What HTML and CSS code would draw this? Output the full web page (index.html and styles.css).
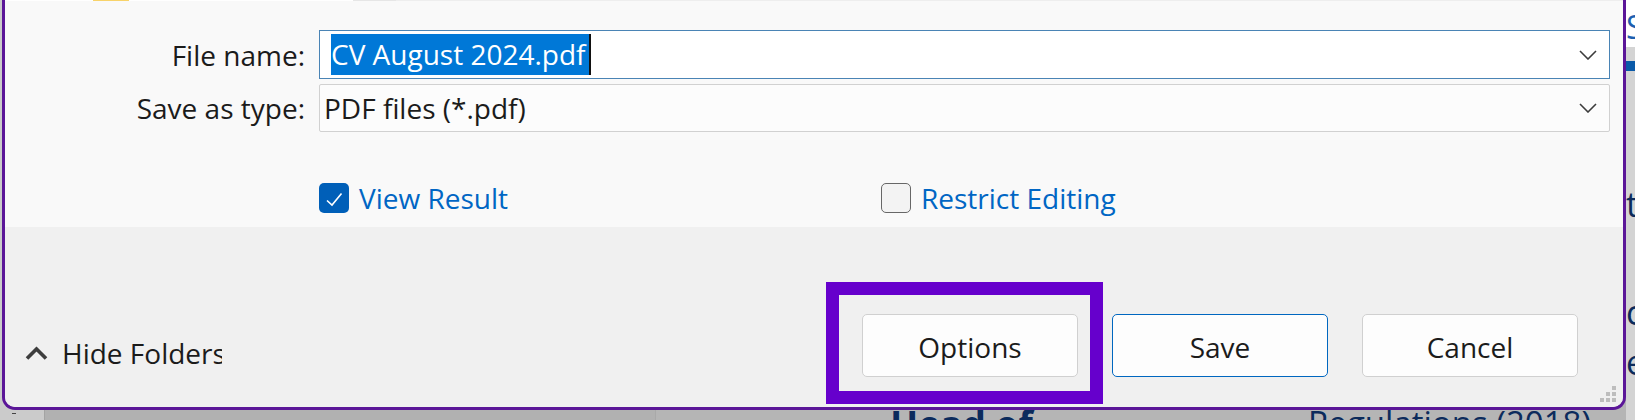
FILE: index.html
```html
<!DOCTYPE html>
<html lang="en">

<head>
    <meta charset="UTF-8">
    <title>Save As</title>
    <link rel="stylesheet" href="styles.css">
</head>

<body>
    <!-- Document behind the dialog -->
    <div class="desk">
        <div class="gutter"><span class="dash"></span></div>
        <div class="nav-pane"></div>
        <div class="doc">
            <div class="doc-body">
                <h2 class="doc-head">Head of</h2>
                <p class="doc-cell">Regulations (2018)</p>
            </div>
            <div class="doc-aside">
                <span class="aside-link">S</span>
                <span class="aside-bar"></span>
                <span class="aside-text line-t">t</span>
                <span class="aside-text line-c">c</span>
                <span class="aside-text line-e">e</span>
            </div>
        </div>
    </div>

    <!-- Save dialog -->
    <div class="dialog">
        <div class="tree-tail">
            <div class="tree-pane">
                <span class="folder"></span>
                <span class="tree-label">Pictures</span>
            </div>
            <div class="tree-split"></div>
            <div class="list-pane"></div>
        </div>

        <div class="form">
            <label class="field-label">File name:</label>
            <div class="combo">
                <span class="sel">CV August 2024.pdf</span><span class="caret"></span>
                <svg class="chev" width="18" height="10" viewBox="0 0 18 10"><polyline points="1,1 9,9 17,1" /></svg>
            </div>

            <label class="field-label">Save as type:</label>
            <div class="dropdown">
                <span>PDF files (*.pdf)</span>
                <svg class="chev" width="18" height="10" viewBox="0 0 18 10"><polyline points="1,1 9,9 17,1" /></svg>
            </div>

            <div class="checks">
                <div class="check">
                    <span class="box on">
                        <svg width="30" height="30" viewBox="0 0 30 30"><polyline points="8,17.5 13,22 22.5,10.5" /></svg>
                    </span>
                    <span>View Result</span>
                </div>
                <div class="check">
                    <span class="box off"></span>
                    <span>Restrict Editing</span>
                </div>
            </div>
        </div>

        <div class="footer">
            <div class="toggle">
                <svg width="23" height="14" viewBox="0 0 23 14"><polyline points="2,12.5 11.5,3 21,12.5" /></svg>
                <span>Hide Folders</span>
            </div>
            <div class="actions">
                <button class="btn">Options</button>
                <button class="btn primary">Save</button>
                <button class="btn">Cancel</button>
            </div>
            <div class="grip">
                <span></span><span></span><span class="dot"></span>
                <span></span><span class="dot"></span><span class="dot"></span>
                <span class="dot"></span><span class="dot"></span><span class="dot"></span>
            </div>
        </div>
    </div>

    <!-- Highlight drawn over the Options button -->
    <div class="callout"></div>
</body>

</html>
```

FILE: styles.css
```css
/* General Styles */
body {
    margin: 0;
    width: 1635px;
    height: 420px;
    overflow: hidden;
    position: relative;
    font-family: 'Open Sans', 'Noto Sans', Arial, sans-serif;
    color: #1b1b1b;
}

h2, p {
    margin: 0;
    padding: 0;
}

/* Document behind */
.desk {
    display: grid;
    grid-template-columns: 44px 611px 1fr;
    height: 420px;
    overflow: hidden;
}

.gutter {
    background-color: #cbcbcb;
    display: flex;
    align-items: flex-end;
    padding-left: 12px;
}

.gutter .dash {
    width: 4px;
    height: 1px;
    background-color: #444;
    margin-bottom: 6px;
}

.nav-pane {
    background-color: #b1b1b1;
    border-left: 1px solid #a4a4a4;
}

.doc {
    background-color: #b5b5b5;
    border-left: 1px solid #a9a9a9;
    display: grid;
    grid-template-columns: 1fr 9px;
    height: 420px;
    overflow: hidden;
}

.doc-body {
    display: flex;
    align-items: flex-start;
    padding: 398px 0 0 234px;
    color: #0c2b5c;
    white-space: nowrap;
}

.doc-head {
    width: 418px;
    font-size: 37px;
    font-weight: 700;
}

.doc-cell {
    font-size: 33px;
    margin-top: 2px;
}

.doc-aside {
    display: flex;
    flex-direction: column;
    background-color: #d4d4d4;
    overflow: hidden;
    white-space: nowrap;
}

.aside-link {
    background-color: #fff;
    color: #1d5fb0;
    font-size: 32px;
    line-height: 40px;
    padding-top: 7px;
}

.aside-bar {
    height: 10px;
    margin-top: 14px;
    background-color: #0a5aa8;
}

.aside-text {
    color: #0c2b5c;
    font-size: 34px;
    line-height: 40px;
}

.line-t { margin-top: 113px; }
.line-c { margin-top: 68px; }
.line-e { margin-top: 10px; }

/* Dialog */
.dialog {
    position: absolute;
    left: 2px;
    top: 0;
    width: 1624px;
    height: 410px;
    box-sizing: border-box;
    border: 3px solid #5b1698;
    border-top: 0;
    border-radius: 0 0 13px 13px;
    overflow: hidden;
    display: flex;
    flex-direction: column;
    background-color: #f0f0f0;
}

.tree-tail {
    display: flex;
    height: 1px;
    overflow: hidden;
    background-color: #eeeeee;
}

.tree-pane {
    width: 348px;
    display: flex;
    align-items: flex-end;
    padding-left: 88px;
    box-sizing: border-box;
    background-color: #fff;
}

.folder {
    width: 36px;
    height: 1px;
    background-color: #f8d36a;
}

.tree-label {
    margin-left: 9px;
    font-size: 28px;
    line-height: 23px;
    color: #222;
}

.tree-split {
    width: 43px;
    background-color: #e6e6e6;
}

.list-pane {
    flex: 1;
}

/* Form area */
.form {
    height: 226px;
    box-sizing: border-box;
    padding: 29px 13px 0 0;
    background-color: #f9f9f9;
    display: grid;
    grid-template-columns: 300px 1fr;
    grid-auto-rows: min-content;
    column-gap: 14px;
    row-gap: 5px;
    align-items: center;
}

.field-label {
    text-align: right;
    font-size: 28px;
    line-height: 38px;
}

.combo,
.dropdown {
    display: flex;
    align-items: center;
    box-sizing: border-box;
    font-size: 28px;
}

.combo {
    height: 49px;
    padding: 0 12px 0 11px;
    border: 1px solid #4a84b5;
    background-color: #fff;
}

.sel {
    background-color: #0078d7;
    color: #fff;
    line-height: 41px;
    padding-right: 3px;
}

.caret {
    width: 2px;
    height: 41px;
    background-color: #111;
}

.dropdown {
    height: 48px;
    padding: 0 12px 0 4px;
    border: 1px solid #d1d1d1;
    border-radius: 2px;
    background-color: #fcfcfc;
}

.chev {
    margin-left: auto;
    fill: none;
    stroke: #3c3c3c;
    stroke-width: 1.6;
}

.checks {
    grid-column: 2;
    margin-top: 42px;
    display: grid;
    grid-template-columns: 562px auto;
}

.check {
    display: flex;
    align-items: center;
    gap: 10px;
    font-size: 28px;
    line-height: 38px;
    color: #0066c4;
}

.box {
    width: 30px;
    height: 30px;
    box-sizing: border-box;
    border-radius: 5px;
}

.box.on {
    background-color: #005fb8;
}

.box.on svg {
    display: block;
    fill: none;
    stroke: #fff;
    stroke-width: 1.6;
}

.box.off {
    border: 1.5px solid #676767;
    background-color: #f3f3f3;
}

/* Footer */
.footer {
    flex: 1;
    display: flex;
    align-items: flex-end;
    padding: 0 7px 0 20px;
    background-color: #f0f0f0;
}

.toggle {
    display: flex;
    align-items: center;
    gap: 14px;
    width: 197px;
    height: 38px;
    margin-bottom: 35px;
    overflow: hidden;
    white-space: nowrap;
    font-size: 28px;
}

.toggle svg {
    flex-shrink: 0;
    fill: none;
    stroke: #3d3d3d;
    stroke-width: 3.6;
}

.actions {
    display: flex;
    gap: 34px;
    margin-left: auto;
    margin-bottom: 30px;
}

.btn {
    width: 216px;
    height: 63px;
    box-sizing: border-box;
    padding: 2px 0 0;
    border: 1px solid #d0d0d0;
    border-radius: 5px;
    background-color: #fdfdfd;
    font-family: inherit;
    font-size: 28px;
    color: #1b1b1b;
}

.btn.primary {
    border-color: #0067c0;
}

.grip {
    display: grid;
    grid-template-columns: repeat(3, 4px);
    grid-auto-rows: 4px;
    gap: 2px;
    margin: 0 0 5px 22px;
}

.grip .dot {
    background-color: #bdbdbd;
}

/* Callout */
.callout {
    position: absolute;
    left: 826px;
    top: 282px;
    width: 277px;
    height: 122px;
    box-sizing: border-box;
    border: 13px solid #6600cc;
}
```
